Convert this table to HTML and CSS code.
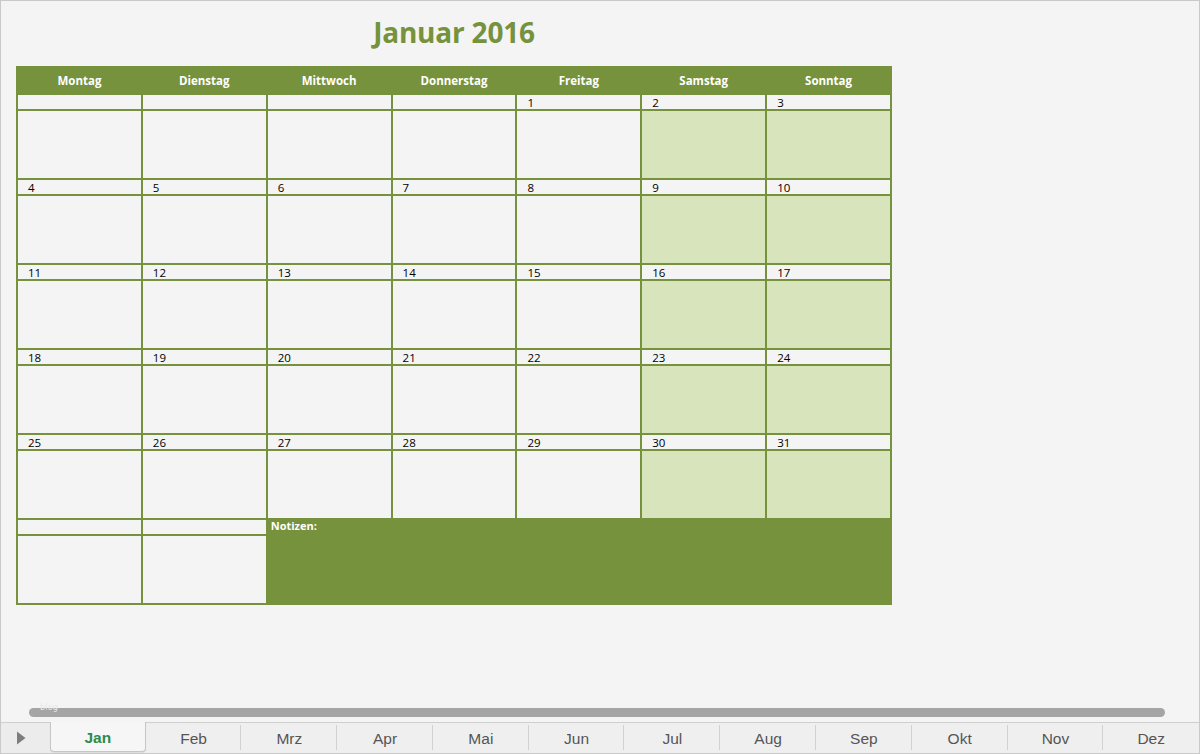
FILE: index.html
```html
<!DOCTYPE html>
<html lang="de">
<head>
<meta charset="utf-8">
<title>Januar 2016</title>
<link rel="stylesheet" href="styles.css">
</head>
<body>
<div class="window">
  <main class="sheet">
    <section class="calendar">
      <h1 class="title">Januar 2016</h1>
      <div class="grid">
        <div class="head">Montag</div><div class="head">Dienstag</div><div class="head">Mittwoch</div><div class="head">Donnerstag</div><div class="head">Freitag</div><div class="head">Samstag</div><div class="head">Sonntag</div>

        <div class="num"></div><div class="num"></div><div class="num"></div><div class="num"></div><div class="num">1</div><div class="num">2</div><div class="num">3</div>
        <div class="body"></div><div class="body"></div><div class="body"></div><div class="body"></div><div class="body"></div><div class="body we"></div><div class="body we"></div>

        <div class="num">4</div><div class="num">5</div><div class="num">6</div><div class="num">7</div><div class="num">8</div><div class="num">9</div><div class="num">10</div>
        <div class="body"></div><div class="body"></div><div class="body"></div><div class="body"></div><div class="body"></div><div class="body we"></div><div class="body we"></div>

        <div class="num">11</div><div class="num">12</div><div class="num">13</div><div class="num">14</div><div class="num">15</div><div class="num">16</div><div class="num">17</div>
        <div class="body"></div><div class="body"></div><div class="body"></div><div class="body"></div><div class="body"></div><div class="body we"></div><div class="body we"></div>

        <div class="num">18</div><div class="num">19</div><div class="num">20</div><div class="num">21</div><div class="num">22</div><div class="num">23</div><div class="num">24</div>
        <div class="body"></div><div class="body"></div><div class="body"></div><div class="body"></div><div class="body"></div><div class="body we"></div><div class="body we"></div>

        <div class="num">25</div><div class="num">26</div><div class="num">27</div><div class="num">28</div><div class="num">29</div><div class="num">30</div><div class="num">31</div>
        <div class="body"></div><div class="body"></div><div class="body"></div><div class="body"></div><div class="body"></div><div class="body we"></div><div class="body we"></div>

        <div class="num"></div><div class="num"></div>
        <div class="notes">Notizen:</div>
        <div class="body"></div><div class="body"></div>
      </div>
    </section>
  </main>

  <div class="scrollrow">
    <div class="thumb"><span class="blog">blog</span></div>
  </div>

  <nav class="tabs">
    <div class="nav-arrow"><svg width="10" height="14" viewBox="0 0 10 14"><path d="M1 0.5 L9.5 7 L1 13.5 Z" fill="#7d7d7d"/></svg></div>
    <div class="tab active">Jan</div>
    <div class="tab">Feb</div>
    <div class="tab">Mrz</div>
    <div class="tab">Apr</div>
    <div class="tab">Mai</div>
    <div class="tab">Jun</div>
    <div class="tab">Jul</div>
    <div class="tab">Aug</div>
    <div class="tab">Sep</div>
    <div class="tab">Okt</div>
    <div class="tab">Nov</div>
    <div class="tab last">Dez</div>
  </nav>
</div>
</body>
</html>
```

FILE: styles.css
```css
* { box-sizing: border-box; }

html, body {
  margin: 0;
  padding: 0;
  background: #f4f4f4;
}

.window {
  width: 1200px;
  height: 754px;
  border: 1px solid #c9c9c9;
  display: flex;
  flex-direction: column;
  background: #f4f4f4;
  font-family: "Open Sans", "Liberation Sans", sans-serif;
  overflow: hidden;
}

.sheet {
  flex: 1;
  padding: 17px 0 0 15px;
}

.calendar {
  width: 876px;
}

.title {
  margin: 0 0 20px 0;
  height: 28px;
  font-size: 28px;
  line-height: 28px;
  font-weight: 700;
  color: #76923c;
  text-align: center;
  letter-spacing: -0.2px;
}

.grid {
  display: grid;
  grid-template-columns: repeat(7, 1fr);
  grid-template-rows: 25px repeat(6, 14px 67px);
  gap: 2px;
  padding: 2px;
  background: #76923c;
}

.head {
  background: #76923c;
  color: #ffffff;
  font-weight: 700;
  font-size: 11.5px;
  line-height: 25px;
  text-align: center;
}

.num {
  background: #f4f4f4;
  color: #000;
  font-size: 11.5px;
  line-height: 15px;
  padding-left: 10px;
}

.body {
  background: #f4f4f4;
}

.body.we {
  background: #d8e4bc;
}

.notes {
  grid-column: 3 / 8;
  grid-row: span 2;
  background: #76923c;
  color: #ffffff;
  font-weight: 700;
  font-size: 11px;
  line-height: 14px;
  padding: 1px 0 0 3px;
  margin: -2px -2px -2px 0;
}

.scrollrow {
  height: 21px;
  padding: 7px 34px 0 28px;
}

.thumb {
  position: relative;
  height: 9px;
  border-radius: 5px;
  background: #a5a5a5;
}

.blog {
  position: absolute;
  left: 11px;
  top: -5px;
  font-family: "DejaVu Sans", sans-serif;
  font-size: 8px;
  line-height: 9px;
  color: #e9e9e9;
  letter-spacing: 0.2px;
}

.tabs {
  height: 31px;
  display: flex;
  border-top: 1px solid #cfcfcf;
  background: #efefef;
  font-family: "Liberation Sans", Arial, sans-serif;
  font-size: 15.5px;
  color: #555555;
}

.nav-arrow {
  width: 49px;
  display: flex;
  align-items: center;
  justify-content: center;
  padding-right: 8px;
  background: #ececec;
}

.tab {
  width: 96px;
  display: flex;
  align-items: center;
  justify-content: center;
  padding-top: 1px;
  position: relative;
}

.tab::after {
  content: "";
  position: absolute;
  right: 0;
  top: 2px;
  bottom: 3px;
  width: 1px;
  background: #d2d2d2;
}

.tab.last::after,
.tab.active::after { display: none; }

.tab.active {
  margin-top: -1px;
  height: 30px;
  padding-top: 2px;
  background: #f6f6f6;
  border: 1px solid #c6c6c6;
  border-top: none;
  border-radius: 0 0 4px 4px;
  color: #2e8a4f;
  font-weight: 700;
  box-shadow: 0 1px 1px rgba(0,0,0,0.08);
}
```
